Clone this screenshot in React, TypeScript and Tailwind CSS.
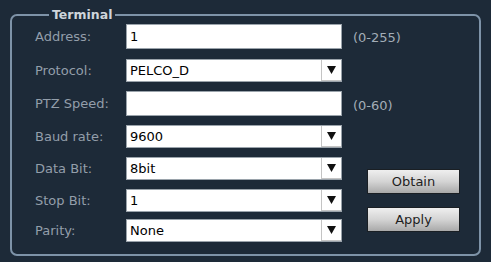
import React from "react";

const font = { fontFamily: '"DejaVu Sans", Verdana, sans-serif' };

function TextBox({ value = "" }: { value?: string }) {
  return (
    <div className="h-[25px] w-[216px] bg-white border border-[#9aa3ab] flex items-center px-[3px] text-[13px] text-black">
      {value}
    </div>
  );
}

function Select({ value }: { value: string }) {
  return (
    <div className="h-[23px] w-[216px] bg-white border border-[#9aa3ab] flex items-center text-[13px] text-black">
      <span className="flex-1 px-[3px]">{value}</span>
      <span className="h-full w-[20px] border-l border-b border-[#c4c4c4] flex items-center justify-center">
        <svg width="9" height="8" viewBox="0 0 9 8">
          <path d="M0 0 H9 L4.5 8 Z" fill="#111" />
        </svg>
      </span>
    </div>
  );
}

function Row({
  label,
  top,
  children,
}: {
  label: string;
  top: string;
  children: React.ReactNode;
}) {
  return (
    <div className={`flex items-center ${top}`}>
      <span className="w-[91px] text-[13px] text-[#939eaa]">{label}</span>
      {children}
    </div>
  );
}

function Button({ children, className }: { children: React.ReactNode; className?: string }) {
  return (
    <button
      className={`h-[25px] w-[93px] border border-[#1a1f24] bg-gradient-to-b from-[#efefef] via-[#d4d4d4] to-[#a9a9a9] text-[13px] text-[#1e1e1e] ${className ?? ""}`}
    >
      {children}
    </button>
  );
}

export default function App() {
  return (
    <div className="w-[491px] h-[262px] bg-[#1d2a38] pt-[8px] pl-[10px]" style={font}>
      <fieldset className="w-[471px] h-[248px] border-2 border-[#7e93a8] rounded-[7px] pl-[23px] flex">
        <legend className="ml-[14px] px-[3px] text-[12.5px] font-bold text-[#cfd5db] leading-[14px]">
          Terminal
        </legend>
        <div className="flex flex-col">
          <Row label="Address:" top="mt-[2px]">
            <TextBox value="1" />
          </Row>
          <Row label="Protocol:" top="mt-[10px]">
            <Select value="PELCO_D" />
          </Row>
          <Row label="PTZ Speed:" top="mt-[9px]">
            <TextBox />
          </Row>
          <Row label="Baud rate:" top="mt-[9px]">
            <Select value="9600" />
          </Row>
          <Row label="Data Bit:" top="mt-[9px]">
            <Select value="8bit" />
          </Row>
          <Row label="Stop Bit:" top="mt-[9px]">
            <Select value="1" />
          </Row>
          <Row label="Parity:" top="mt-[7px]">
            <Select value="None" />
          </Row>
        </div>
        <div className="flex flex-col pl-[11px] text-[13px] text-[#a3adb7]">
          <span className="mt-[7px] leading-[17px]">(0-255)</span>
          <span className="mt-[51px] leading-[17px]">(0-60)</span>
          <Button className="mt-[55px] ml-[14px]">Obtain</Button>
          <Button className="mt-[13px] ml-[14px]">Apply</Button>
        </div>
      </fieldset>
    </div>
  );
}
